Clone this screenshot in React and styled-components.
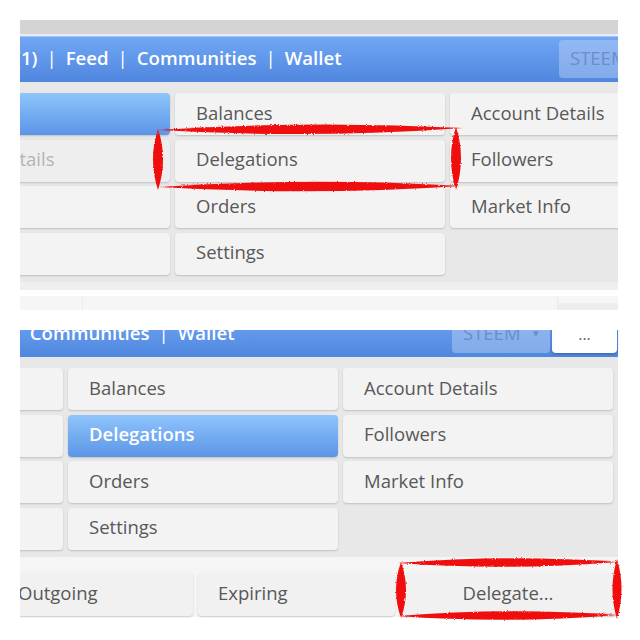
import React from "react";
import styled, { createGlobalStyle } from "styled-components";

const GlobalStyle = createGlobalStyle`
	body {
		margin: 0;
		background: #ffffff;
		font-family: "Open Sans", "Liberation Sans", sans-serif;
	}
`;

const menuTop = [
	["Wallet", "Balances", "Account Details"],
	["Account Details", "Delegations", "Followers"],
	["Keys", "Orders", "Market Info"],
	["Transfers", "Settings", null],
];

const App = () => {
	return (
		<>
			<GlobalStyle />
			<Frame>
				<Viewport $w={598} $h={290}>
					<TopStrip />
					<TopLine />
					<WalletPage shift={-125} active="Wallet" muted="Account Details" />
					<Divider />
					<WhiteGap />
					<TableHead>
						<HeadCell />
						<HeadCell />
						<HeadCell $dark />
					</TableHead>
				</Viewport>
				<Viewport $w={600} $h={290}>
					<WalletPage shift={-232} top={-19} active="Delegations" dropdown>
						<LowerBar>
							<SubButton>Incoming</SubButton>
							<SubButton>Outgoing</SubButton>
							<SubButton>Expiring</SubButton>
							<SubButton $center>Delegate...</SubButton>
						</LowerBar>
					</WalletPage>
				</Viewport>
				<Marks width="640" height="640" viewBox="0 0 640 640">
					<defs>
						<filter id="brush">
							<feTurbulence type="fractalNoise" baseFrequency="0.9" numOctaves="2" seed="3" />
							<feDisplacementMap in="SourceGraphic" scale="2.5" />
						</filter>
					</defs>
					<g fill="#f00a0a" filter="url(#brush)">
						<path d="M158 130 Q311 120 463 128 Q311 139 158 130 Z" />
						<path d="M158 187 Q311 177 461 186 Q311 196 158 187 Z" />
						<path d="M158 129 Q148 159 158 190 Q168 159 158 129 Z" />
						<path d="M456 127 Q446 158 456 190 Q466 158 456 127 Z" />
						<path d="M398 563 Q507 554 618 562 Q507 571 398 563 Z" />
						<path d="M398 616 Q507 607 618 615 Q507 624 398 616 Z" />
						<path d="M401 562 Q391 590 401 618 Q411 590 401 562 Z" />
						<path d="M617 559 Q608 589 617 619 Q626 589 617 559 Z" />
					</g>
				</Marks>
			</Frame>
		</>
	);
};

const WalletPage = ({ shift, top = 0, active, muted, dropdown, children }) => (
	<Page $shift={shift} $top={top}>
		<NavBar>
			<NavLink>(1)</NavLink>
			<NavSep>|</NavSep>
			<NavLink>Feed</NavLink>
			<NavSep>|</NavSep>
			<NavLink>Communities</NavLink>
			<NavSep>|</NavSep>
			<NavLink>Wallet</NavLink>
			<Spacer />
			<SteemButton>
				STEEM
				{dropdown && <Caret>▾</Caret>}
			</SteemButton>
			<MoreButton>...</MoreButton>
		</NavBar>
		<MenuGrid>
			{menuTop.flat().map((label, i) =>
				label ? (
					<MenuCell key={i} $active={label === active} $muted={label === muted && i % 3 === 0}>
						{label}
					</MenuCell>
				) : (
					<span key={i} />
				)
			)}
		</MenuGrid>
		{children}
	</Page>
);

const Frame = styled.div`
	position: relative;
	width: 640px;
	height: 640px;
	box-sizing: border-box;
	padding: 20px 0 0 20px;
	display: flex;
	flex-direction: column;
	gap: 20px;
	overflow: hidden;
`;

const Viewport = styled.div`
	width: ${(p) => p.$w}px;
	height: ${(p) => p.$h}px;
	overflow: hidden;
	background: #ffffff;
`;

const TopStrip = styled.div`
	height: 14px;
	background: #d4d4d4;
`;

const TopLine = styled.div`
	height: 2px;
	background: #e6edf8;
`;

const Page = styled.div`
	width: 830px;
	margin-left: ${(p) => p.$shift}px;
	margin-top: ${(p) => p.$top}px;
`;

const NavBar = styled.div`
	height: 46px;
	box-sizing: border-box;
	display: flex;
	align-items: center;
	padding: 0 1px 0 120px;
	background: linear-gradient(#72a7f5, #4f87df);
	box-shadow: inset 0 1px 0 rgba(255, 255, 255, 0.35);
`;

const NavLink = styled.span`
	color: #ffffff;
	font-size: 18.6px;
	font-weight: 600;
	white-space: nowrap;
	margin-bottom: 4px;
`;

const NavSep = styled.span`
	color: #ffffff;
	font-size: 18.6px;
	margin: 0 9px 4px;
`;

const Spacer = styled.div`
	flex: 1;
`;

const SteemButton = styled.div`
	width: 98px;
	height: 38px;
	box-sizing: border-box;
	padding: 0 0 3px 11px;
	display: flex;
	align-items: center;
	border-radius: 4px;
	background: rgba(190, 210, 245, 0.45);
	color: #6a8ccc;
	font-size: 18.5px;
`;

const Caret = styled.span`
	font-size: 11px;
	margin-left: 12px;
`;

const MoreButton = styled.div`
	width: 65px;
	height: 38px;
	margin-left: 2px;
	display: flex;
	align-items: center;
	justify-content: center;
	border-radius: 4px;
	background: #ffffff;
	color: #666666;
	font-size: 16px;
	box-shadow: 0 1px 3px rgba(0, 0, 0, 0.3);
`;

const MenuGrid = styled.div`
	display: grid;
	grid-template-columns: repeat(3, 270px);
	grid-auto-rows: 42px;
	column-gap: 5px;
	row-gap: 4.5px;
	padding: 11px 5px 7px;
	background: #e8e8e8;
`;

const MenuCell = styled.div`
	display: flex;
	align-items: center;
	padding: 0 0 4px 21px;
	border-radius: 4px;
	font-size: 18.5px;
	white-space: nowrap;
	overflow: hidden;
	color: ${(p) => (p.$active ? "#ffffff" : p.$muted ? "#b4b4b4" : "#585858")};
	font-weight: ${(p) => (p.$active ? 600 : 400)};
	background: ${(p) =>
		p.$active ? "linear-gradient(#8fc4fb, #5b95e7)" : p.$muted ? "#eeeeee" : "#f3f3f3"};
	box-shadow: 0 1px 2px rgba(0, 0, 0, 0.18);
`;

const Divider = styled.div`
	height: 8px;
	background: #efefef;
`;

const WhiteGap = styled.div`
	height: 6px;
	background: #ffffff;
`;

const TableHead = styled.div`
	display: grid;
	grid-template-columns: 63px 475px 1fr;
	height: 20px;
	background: #f6f6f6;
`;

const HeadCell = styled.div`
	border-right: 1px solid #ececec;
	${(p) => p.$dark && "margin-top: 7px; background: #ededed; border: none;"}
`;

const LowerBar = styled.div`
	display: grid;
	grid-template-columns: 200px 195px 197px 1fr;
	gap: 5px;
	padding: 16px 2px 1px 5px;
	background: #f5f5f5;
`;

const SubButton = styled.div`
	height: 43px;
	box-sizing: border-box;
	display: flex;
	align-items: center;
	justify-content: ${(p) => (p.$center ? "center" : "flex-start")};
	padding: 0 0 4px ${(p) => (p.$center ? 0 : 20)}px;
	border-radius: 4px;
	background: #f1f1f1;
	color: #585858;
	font-size: 18.5px;
	box-shadow: 0 1px 2px rgba(0, 0, 0, 0.18);
`;

const Marks = styled.svg`
	position: absolute;
	left: 0;
	top: 0;
	pointer-events: none;
`;

export default App;
